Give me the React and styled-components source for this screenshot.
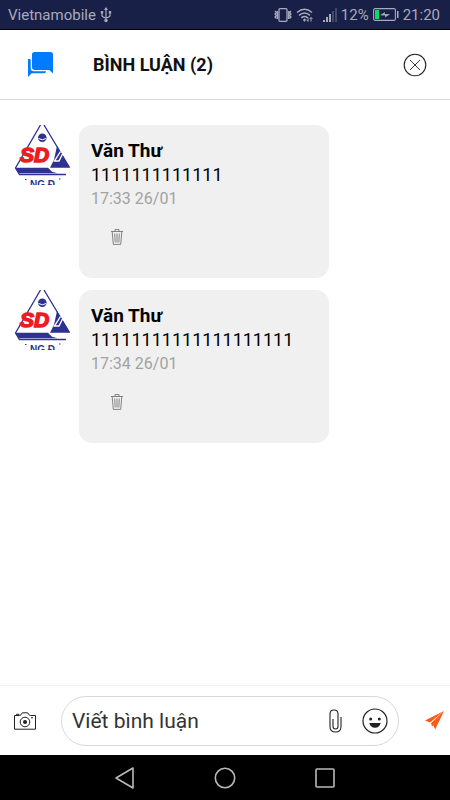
import { useState } from "react";
import styled, { createGlobalStyle } from "styled-components";

const GlobalStyle = createGlobalStyle`
  * {
    box-sizing: border-box;
  }
  body {
    margin: 0;
    background: #fff;
    font-family: Roboto, "Noto Sans", sans-serif;
  }
  svg {
    display: block;
  }
`;

const Screen = styled.div`
  min-height: 100vh;
  display: flex;
  flex-direction: column;
`;

const StatusBar = styled.div`
  height: 30px;
  flex-shrink: 0;
  padding: 0 10px 0 8px;
  display: flex;
  align-items: center;
  justify-content: space-between;
  background: #192048;
  border-bottom: 1px solid #04060f;
  color: #a8aabb;
  font-size: 15px;
  line-height: 20px;
`;

const StatusGroup = styled.div`
  display: flex;
  align-items: center;
  gap: 4px;
  .signal {
    margin-left: 6px;
  }
`;

const Header = styled.header`
  height: 70px;
  flex-shrink: 0;
  padding: 0 21px 0 28px;
  display: flex;
  align-items: center;
  border-bottom: 1px solid #dcdcdc;
`;

const Title = styled.h1`
  flex: 1;
  margin: 0 0 0 40px;
  font-size: 18px;
  line-height: 24px;
  font-weight: 700;
  color: #111;
`;

const IconButton = styled.button`
  display: flex;
  align-items: center;
  justify-content: center;
  border: none;
  background: none;
  padding: ${(props) => props.$pad || "0"};
  cursor: pointer;
`;

const CommentList = styled.ul`
  flex: 1;
  list-style: none;
  margin: 0;
  padding: 25px 13px;
  display: flex;
  flex-direction: column;
  gap: 12px;
`;

const Comment = styled.li`
  display: flex;
  align-items: flex-start;
  gap: 6px;
`;

const AvatarImage = styled.svg`
  flex-shrink: 0;
`;

const Bubble = styled.div`
  flex: 0 1 250px;
  min-width: 0;
  min-height: 153px;
  padding: 14px 12px;
  border-radius: 13px;
  background: #f0f0f0;
  overflow-wrap: anywhere;
`;

const Author = styled.div`
  font-size: 19px;
  line-height: 24px;
  font-weight: 700;
  color: #000;
`;

const Message = styled.p`
  margin: 0;
  font-size: 18px;
  line-height: 24px;
  color: #000;
`;

const Time = styled.time`
  display: block;
  font-size: 16px;
  line-height: 24px;
  color: #a2a2a2;
`;

const Composer = styled.form`
  height: 70px;
  flex-shrink: 0;
  padding: 0 6px 0 14px;
  display: flex;
  align-items: center;
  border-top: 1px solid #f2f2f2;
`;

const InputBox = styled.div`
  flex: 1;
  min-width: 0;
  height: 50px;
  margin: 0 26px 0 25px;
  padding: 0 10px;
  display: flex;
  align-items: center;
  gap: 20px;
  border: 1px solid #d8d8dc;
  border-radius: 25px;
`;

const CommentInput = styled.input`
  flex: 1;
  min-width: 0;
  border: none;
  outline: none;
  padding: 0;
  background: none;
  font-family: inherit;
  font-size: 21px;
  line-height: 28px;
  color: #333;
  &::placeholder {
    color: #333;
    opacity: 1;
  }
`;

const SystemNav = styled.nav`
  height: 45px;
  flex-shrink: 0;
  display: flex;
  align-items: center;
  justify-content: center;
  gap: 76px;
  background: #000;
`;

const UsbIcon = () => (
  <svg width="12" height="16" viewBox="0 0 12 16" fill="none" stroke="#a8aabb" strokeWidth="1.2">
    <path d="M6 2v11M2 5v3.500q0 1.500 4 2.500M10 5v3.500q0 1.500-4 2.500" />
    <path d="M6 0l2 3H4zM.8 4h2.400v2.400H.8zM8.800 4h2.400v2.400H8.800z" fill="#a8aabb" stroke="none" />
    <circle cx="6" cy="13.500" r="1.700" fill="#a8aabb" stroke="none" />
  </svg>
);

const VibrateIcon = () => (
  <svg width="18" height="14" viewBox="0 0 18 14" fill="none" stroke="#a8aabb" strokeWidth="1.300">
    <rect x="5" y=".7" width="8" height="12.600" rx="1" />
    <path d="M1 3l1.500 1.500L1 6l1.500 1.500L1 9l1.500 1.500M3.500 3v8M17 3l-1.500 1.500L17 6l-1.500 1.500L17 9l-1.500 1.500M14.700 3v8" />
  </svg>
);

const WifiIcon = () => (
  <svg width="17" height="14" viewBox="0 0 17 14" fill="none" stroke="#a8aabb" strokeWidth="1.500">
    <path d="M1 4.500q7.500-6.500 15 0M3 7.300q5.500-4.600 11 0M5.300 9.800q3.200-2.600 6.400 0" />
    <path d="M8.500 10.200l1.600 1.900-1.600 1.700-1.600-1.700z" fill="#a8aabb" stroke="none" />
    <path d="M12 9.500v4M15 9.500v4M10.800 11.800l1.200 1.500M13.800 11l1.200-1.500 1.500 1.500" strokeWidth="1" />
  </svg>
);

const SignalIcon = () => (
  <svg className="signal" width="14" height="14" viewBox="0 0 14 14" fill="#a8aabb">
    <rect x="0" y="12" width="2" height="2" />
    <rect x="3" y="9" width="2" height="5" />
    <rect x="6" y="6" width="2" height="8" />
    <rect x="9" y="3" width="2" height="11" opacity=".3" />
    <rect x="12" y="0" width="2" height="14" opacity=".3" />
  </svg>
);

const BatteryIcon = () => (
  <svg width="26" height="13" viewBox="0 0 26 13">
    <rect x=".6" y=".6" width="21.800" height="11.800" rx="1.500" fill="none" stroke="#a8aabb" strokeWidth="1.100" />
    <rect x="2" y="2" width="4" height="9" fill="#00e05a" />
    <path d="M7 7.300l5-3.300-.3 2 5.300.3-5 3.300.3-2z" fill="#a8aabb" />
    <rect x="24" y="3" width="1.500" height="7" fill="#a8aabb" />
  </svg>
);

const ChatIcon = () => (
  <svg width="25" height="25" viewBox="0 0 25 25" fill="#007aff">
    <path d="M6.500 0h16q2.500 0 2.500 2.500V21.500l-3.600-3.500H7q-3 0-3-3V2.500Q4 0 6.500 0z" />
    <path d="M0 7h1.500Q2.700 7 2.700 8.200V16q0 3.200 3.200 3.200H18v.3q0 1.800-1.800 1.800H3.700L0 25z" />
  </svg>
);

const CloseIcon = () => (
  <svg width="24" height="24" viewBox="0 0 24 24" fill="none" stroke="#222" strokeWidth="1.100">
    <circle cx="12" cy="12" r="10.800" />
    <path d="M7 7l10 10M17 7L7 17" strokeWidth=".9" />
  </svg>
);

const TrashIcon = () => (
  <svg width="12" height="16" viewBox="0 0 12 16" fill="none" stroke="#555" strokeWidth=".7">
    <path d="M0 2.500h12M4 2.300V.6h4v1.700M1.200 2.700l1.100 12.700h7.400l1.100-12.700M3.700 4.500l.5 9M6 4.500v9M8.300 4.500l-.5 9" />
  </svg>
);

const CameraIcon = () => (
  <svg width="22" height="18" viewBox="0 0 22 18" fill="none" stroke="#222">
    <path d="M.5 3.500H5.500Q7 3.500 7.500 1.800 7.800.8 9 .8h4q1.200 0 1.500 1Q15 3.500 16.500 3.500h5v13.700H.5z" />
    <path d="M2.500 3V2.300H5V3M17 5.800h2" />
    <circle cx="11" cy="10" r="4.800" />
    <circle cx="11" cy="10" r="2" fill="#222" stroke="none" />
  </svg>
);

const ClipIcon = () => (
  <svg width="13" height="24" viewBox="0 0 13 24" fill="none" stroke="#222" strokeWidth="1.100">
    <path d="M9 7v10.500q0 2.500-2.500 2.500T4 17.500V10M9 15V5Q9 1 5 1T1 5v12.500Q1 23 6.500 23T12 17.500V8" />
  </svg>
);

const SmileIcon = () => (
  <svg width="26" height="26" viewBox="0 0 26 26">
    <circle cx="13" cy="13" r="12" fill="none" stroke="#222" strokeWidth="1.200" />
    <circle cx="8.700" cy="11" r="1.500" fill="#222" />
    <circle cx="17.300" cy="11" r="1.500" fill="#222" />
    <path d="M7.300 15h11.400q-1.200 4.800-5.700 4.800t-5.700-4.800z" fill="#222" />
  </svg>
);

const SendIcon = () => (
  <svg width="19" height="19" viewBox="0 0 19 19" fill="#f95a14">
    <path d="M19 0L0 9.500l5 2zM19 0L6 12.200l1 3.300 1.800-2zM19 0L8.300 14.300l1.900 4.200z" />
  </svg>
);

const Avatar = () => (
  <AvatarImage width="60" height="60" viewBox="0 0 60 60" role="img" aria-label="Văn Thư">
    <g stroke="#2d3192" strokeWidth="1.300" fill="none">
      <path d="M27.500 0L2.500 43l4 6.500H53M31 0l25.500 42.500" />
    </g>
    <circle cx="29.300" cy="12.800" r="4.300" fill="#2d3192" />
    <path d="M25.500 13.500q4 2.500 7.700 0" stroke="#fff" fill="none" />
    <path d="M2.500 42.700H35l4 4 5.500 1.600H6z" fill="#2d3192" />
    <path d="M44 21l13 21.700H37l4-8z" fill="#2d3192" />
    <path d="M47.500 26.500L41.500 36h4.500l4-8" stroke="#fff" strokeWidth="1.400" fill="none" />
    <g fontFamily="Liberation Sans, sans-serif" fontWeight="700">
      <text x="7" y="37" fontStyle="italic" fontSize="21" fill="#ed1c24" stroke="#ed1c24" strokeWidth="1.500">
        SD
      </text>
      <text x="17" y="63" fontSize="10" fill="#2d3192">
        NG Đ
      </text>
    </g>
    <path d="M12 54.500h1.500M46 54h1.500" stroke="#2d3192" />
  </AvatarImage>
);

const comments = [
  { id: 1, author: "Văn Thư", text: "1111111111111", time: "17:33 26/01" },
  { id: 2, author: "Văn Thư", text: "11111111111111111111", time: "17:34 26/01" },
];

const CommentScreen = () => {
  const [items, setItems] = useState(comments);
  const [value, setValue] = useState("");

  const handleDelete = (id) => {
    setItems(items.filter((item) => item.id !== id));
  };

  const handleSubmit = (e) => {
    e.preventDefault();
    if (!value.trim()) return;
    const now = new Date();
    const pad = (n) => String(n).padStart(2, "0");
    const time = `${pad(now.getHours())}:${pad(now.getMinutes())} ${pad(now.getDate())}/${pad(now.getMonth() + 1)}`;
    setItems([...items, { id: now.getTime(), author: "Văn Thư", text: value, time }]);
    setValue("");
  };

  return (
    <>
      <GlobalStyle />
      <Screen>
        <StatusBar>
          <StatusGroup>
            <span>Vietnamobile</span>
            <UsbIcon />
          </StatusGroup>
          <StatusGroup>
            <VibrateIcon />
            <WifiIcon />
            <SignalIcon />
            <span>12%</span>
            <BatteryIcon />
            <span>21:20</span>
          </StatusGroup>
        </StatusBar>

        <Header>
          <ChatIcon />
          <Title>BÌNH LUẬN ({items.length})</Title>
          <IconButton type="button" aria-label="Đóng" $pad="2px">
            <CloseIcon />
          </IconButton>
        </Header>

        <CommentList>
          {items.map((item) => (
            <Comment key={item.id}>
              <Avatar />
              <Bubble>
                <Author>{item.author}</Author>
                <Message>{item.text}</Message>
                <Time>{item.time}</Time>
                <IconButton type="button" aria-label="Xóa" $pad="18px 20px" onClick={() => handleDelete(item.id)}>
                  <TrashIcon />
                </IconButton>
              </Bubble>
            </Comment>
          ))}
        </CommentList>

        <Composer onSubmit={handleSubmit}>
          <IconButton type="button" aria-label="Chụp ảnh">
            <CameraIcon />
          </IconButton>
          <InputBox>
            <CommentInput
              aria-label="Viết bình luận"
              placeholder="Viết bình luận"
              value={value}
              onChange={(e) => setValue(e.target.value)}
            />
            <IconButton type="button" aria-label="Đính kèm">
              <ClipIcon />
            </IconButton>
            <IconButton type="button" aria-label="Biểu cảm">
              <SmileIcon />
            </IconButton>
          </InputBox>
          <IconButton type="submit" aria-label="Gửi">
            <SendIcon />
          </IconButton>
        </Composer>

        <SystemNav>
          <IconButton type="button" aria-label="Quay lại">
            <svg width="24" height="24" viewBox="0 0 24 24" fill="none" stroke="#b9b9b9" strokeWidth="1.600" strokeLinejoin="round">
              <path d="M20 2v20L3 12z" />
            </svg>
          </IconButton>
          <IconButton type="button" aria-label="Màn hình chính">
            <svg width="24" height="24" viewBox="0 0 24 24" fill="none" stroke="#b9b9b9" strokeWidth="1.600">
              <circle cx="12" cy="12" r="9.700" />
            </svg>
          </IconButton>
          <IconButton type="button" aria-label="Ứng dụng gần đây">
            <svg width="24" height="24" viewBox="0 0 24 24" fill="none" stroke="#b9b9b9" strokeWidth="1.600">
              <rect x="3" y="3" width="18" height="18" rx="1" />
            </svg>
          </IconButton>
        </SystemNav>
      </Screen>
    </>
  );
};

export default CommentScreen;
